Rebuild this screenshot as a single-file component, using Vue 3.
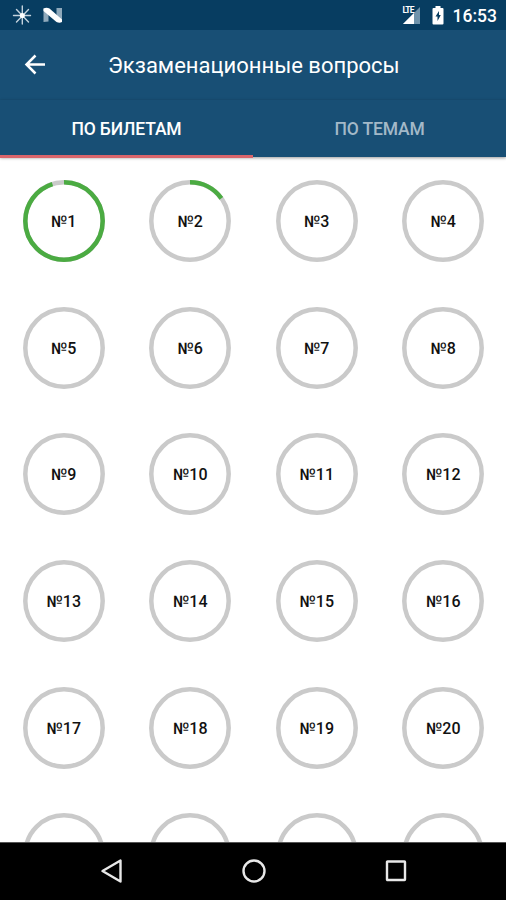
<script setup>
import { ref } from 'vue';

const RADIUS = 38.7;
const LENGTH = 2 * Math.PI * RADIUS;

const tabs = ['По билетам', 'По темам'];
const activeTab = ref(0);

// share of answered questions, by ticket number
const progress = { 1: 0.95, 2: 0.15 };

// the last row only peeks out from under the navigation bar, so it has no labels
const LABELLED = 20;

const tickets = Array.from({ length: 24 }, (_, i) => ({
  id: i + 1,
  done: progress[i + 1] || 0
}));
</script>

<template>
  <div class="screen">
    <div class="status-bar">
      <svg class="status-left" width="64" height="30" viewBox="0 0 64 30">
        <g stroke="#c3d2dd" stroke-width="1.4" stroke-linecap="round">
          <path d="M22.3 6v18M13.5 15.5h17M16.5 9.500l12 12.500M28.500 9.500l-12 12.500" />
        </g>
        <circle cx="22.3" cy="15.5" r="2.5" fill="#fff" />
        <path d="M43.500 8.500l5 2v11l-5 .5zM56.500 8h5.500v13.500l-5.500-2z" fill="#8fa9bb" />
        <path d="M43.500 8.500q3-1.500 6 0l12.500 11v2.500q-2.500 1.500-5.500 0l-13-11z" fill="#fff" />
      </svg>
      <div class="status-right">
        <span class="lte">LTE</span>
        <svg class="signal" width="18" height="17" viewBox="0 0 18 17">
          <path d="M17 0v17H0z" fill="#6f93ab" />
          <path d="M11 6v11H0z" fill="#fff" />
        </svg>
        <svg class="battery" width="12" height="19" viewBox="0 0 12 19">
          <path d="M3.500 0h5v2H10.500q1 0 1 1v14.500q0 1-1 1h-9q-1 0-1-1V3q0-1 1-1h2z" fill="#fff" />
          <path d="M7 5L3.500 10.500h2v4.500L8.800 9H7z" fill="#073d61" />
        </svg>
        <span class="clock">16:53</span>
      </div>
    </div>

    <header class="toolbar">
      <svg class="back" width="22" height="22" viewBox="0 0 22 22">
        <path d="M21 10.500H3M11.500 1.500l-9 9 9 9" fill="none" stroke="#fff" stroke-width="2.5" />
      </svg>
      <h1 class="title">Экзаменационные вопросы</h1>
    </header>

    <nav class="tabs">
      <button
        v-for="(tab, i) in tabs"
        :key="tab"
        class="tab"
        :class="{ active: activeTab === i }"
        @click="activeTab = i"
      >
        {{ tab }}
      </button>
    </nav>

    <main class="grid">
      <div v-for="t in tickets" :key="t.id" class="cell">
        <div class="ticket">
          <svg class="ring" viewBox="0 0 82 82">
            <circle class="track" cx="41" cy="41" :r="RADIUS" />
            <circle
              v-if="t.done"
              class="value"
              cx="41"
              cy="41"
              :r="RADIUS"
              :stroke-dasharray="`${LENGTH * t.done} ${LENGTH}`"
              transform="rotate(-90 41 41)"
            />
          </svg>
          <span v-if="t.id <= LABELLED" class="label">№{{ t.id }}</span>
        </div>
      </div>
    </main>

    <footer class="nav-bar">
      <svg width="24" height="26" viewBox="0 0 24 26">
        <path d="M20.500 2.500v21L2.500 13z" />
      </svg>
      <svg width="26" height="26" viewBox="0 0 26 26">
        <circle cx="13" cy="13" r="10.500" />
      </svg>
      <svg width="24" height="26" viewBox="0 0 24 26">
        <rect x="3" y="3.500" width="18" height="18.500" rx="0.500" />
      </svg>
    </footer>
  </div>
</template>

<style>
body { margin: 0; background: #fff; }
</style>

<style scoped>
.screen { display: flex; flex-direction: column; width: 506px; height: 900px; overflow: hidden; background: #fff; font-family: Roboto, sans-serif; }
.status-bar { flex: none; display: flex; justify-content: space-between; height: 30px; background: #073d61; color: #fff; }
.status-right { display: flex; align-items: center; padding-right: 9px; }
.lte { align-self: flex-start; margin: 6px -10px 0 0; font-size: 8.5px; line-height: 9px; font-weight: 700; letter-spacing: -0.9px; z-index: 1; }
.signal { margin: 0 11px 0 -1px; }
.battery { margin-right: 9px; }
.clock { font-size: 17.5px; font-weight: 500; line-height: 30px; padding-top: 2px; }
.toolbar { flex: none; display: flex; align-items: center; height: 70px; padding-left: 24px; background: #184f75; color: #fff; }
.title { margin: 2px 0 0 62px; font-size: 22px; font-weight: 400; line-height: 28px; white-space: nowrap; }
.tabs { flex: none; display: flex; height: 57px; background: #184f75; box-shadow: 0 1px 3px rgba(0, 0, 0, 0.4); z-index: 1; }
.tab { flex: 1; box-sizing: border-box; height: 58px; padding: 3px 0 0; border: 0; border-bottom: 3px solid transparent; background: none; color: #a3b9c8; font: 500 17.5px Roboto, sans-serif; letter-spacing: -0.15px; text-transform: uppercase; cursor: pointer; }
.tab.active { color: #fff; border-bottom-color: #d9656b; }
.grid { flex: 1; min-height: 0; display: grid; grid-template-columns: repeat(4, 126.5px); grid-auto-rows: 126.6px; padding: 1px 0 0 0.5px; overflow: hidden; }
.cell { display: flex; align-items: center; justify-content: center; }
.ticket { display: grid; place-items: center; width: 82px; height: 82px; }
.ring { grid-area: 1 / 1; width: 82px; height: 82px; }
.ring circle { fill: none; stroke-width: 4.5; }
.track { stroke: #cacaca; }
.value { stroke: #4bab42; }
.label { grid-area: 1 / 1; padding-top: 1px; color: #111; font-size: 16px; font-weight: 500; }
.nav-bar { flex: none; box-sizing: border-box; display: flex; justify-content: space-between; align-items: center; height: 58px; padding: 0 98px 2px 100px; border-top: 1px solid #555; background: #000; }
.nav-bar svg { fill: none; stroke: #e8e8e8; stroke-width: 2.4; stroke-linejoin: round; }
</style>
